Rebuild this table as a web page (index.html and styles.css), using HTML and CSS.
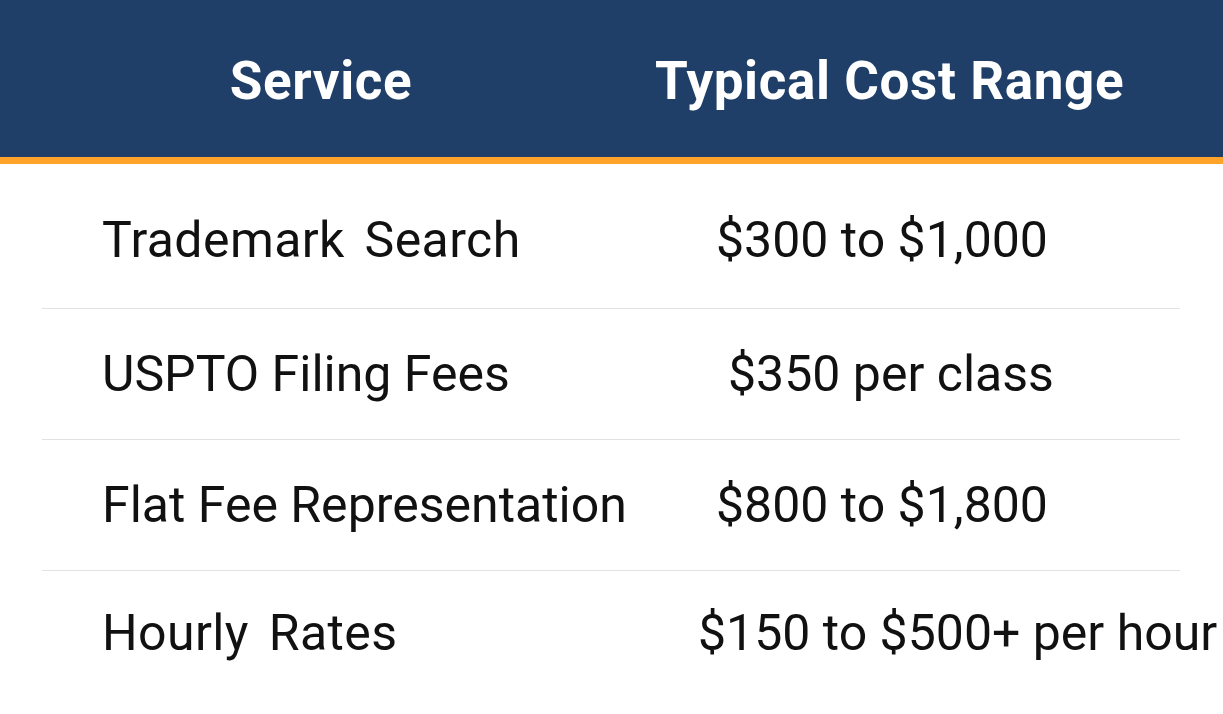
FILE: index.html
```html
<!DOCTYPE html>
<html>
<head>
<meta charset="utf-8">
<link rel="stylesheet" href="styles.css">
</head>
<body>
<div class="table">
  <div class="head">
    <div class="hcell">Service</div>
    <div class="hcell">Typical Cost Range</div>
  </div>
  <div class="body">
    <div class="row first">
      <div class="svc svc-wide">Trademark Search</div>
      <div class="cost">$300 to $1,000</div>
    </div>
    <div class="row">
      <div class="svc">USPTO Filing Fees</div>
      <div class="cost c2">$350 per class</div>
    </div>
    <div class="row">
      <div class="svc">Flat Fee Representation</div>
      <div class="cost">$800 to $1,800</div>
    </div>
    <div class="row last">
      <div class="svc svc-wide">Hourly Rates</div>
      <div class="cost c4">$150 to $500+ per hour</div>
    </div>
  </div>
</div>
</body>
</html>
```

FILE: styles.css
```css
html, body {
  margin: 0;
  padding: 0;
  background: #ffffff;
}
body {
  width: 1223px;
  height: 714px;
  overflow: hidden;
  font-family: Roboto, "Liberation Sans", sans-serif;
  color: #111111;
}
.head {
  background: #1f3f68;
  border-bottom: 7px solid #ffa32a;
  height: 157px;
  display: grid;
  grid-template-columns: 558px 580px;
  padding: 0 43px 0 42px;
  align-items: center;
}
.hcell {
  color: #ffffff;
  font-weight: 700;
  font-size: 53px;
  letter-spacing: 0.6px;
  text-align: center;
  padding-top: 4px;
}
.hcell + .hcell {
  text-align: left;
  padding-left: 55px;
}
.body {
  padding: 0 43px 0 42px;
}
.row {
  display: grid;
  grid-template-columns: 558px 580px;
  align-items: center;
  height: 130px;
  border-bottom: 1px solid #e2e2e2;
  font-size: 50px;
  white-space: nowrap;
}
.row.first {
  height: 145px;
  padding-top: 8px;
  box-sizing: border-box;
}
.row.last {
  border-bottom: none;
  height: 124px;
}
.svc {
  padding-left: 60px;
}
.svc-wide {
  word-spacing: 7px;
  letter-spacing: 0.4px;
}
.cost {
  padding-left: 116px;
}
.cost.c2 {
  padding-left: 128px;
}
.cost.c4 {
  padding-left: 98px;
}
```
